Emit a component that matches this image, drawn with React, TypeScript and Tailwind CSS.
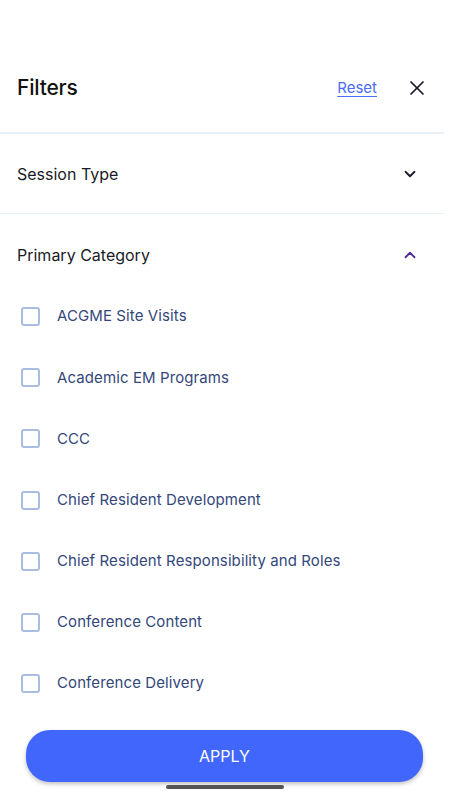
import { X, ChevronDown, ChevronUp } from 'lucide-react';

const categories = [
  'ACGME Site Visits',
  'Academic EM Programs',
  'CCC',
  'Chief Resident Development',
  'Chief Resident Responsibility and Roles',
  'Conference Content',
  'Conference Delivery',
];

export default function App() {
  return (
    <div className="relative h-[800px] w-[450px] overflow-hidden bg-white" style={{ fontFamily: 'Inter, "Noto Sans", sans-serif' }}>
      <div className="h-[64px]" />
      <div className="flex h-[48px] items-center pl-[17px] pr-[21px]">
        <h1 className="flex-1 text-[21px] font-medium tracking-[-0.2px] text-[#111]">Filters</h1>
        <button className="mr-[28px] text-[15px] text-[#4a6cf7] underline underline-offset-[3px]">Reset</button>
        <X className="h-[24px] w-[24px] text-[#1a1a2a]" strokeWidth={1.7} />
      </div>
      <div className="mt-[20px] h-[2px] w-[444px] bg-[#e8f0f8]" />

      <div className="flex h-[79px] items-center pl-[17px] pr-[31px]">
        <span className="flex-1 text-[16px] text-[#1b1b26]">Session Type</span>
        <ChevronDown className="h-[18px] w-[18px] text-[#1a1a2a]" strokeWidth={2.4} />
      </div>
      <div className="h-[1px] w-[444px] bg-[#e8f0f8]" />

      <div className="flex h-[72px] items-center pl-[17px] pr-[31px] pt-[10px]">
        <span className="flex-1 text-[16px] text-[#1b1b26]">Primary Category</span>
        <ChevronUp className="h-[18px] w-[18px] text-[#4a2a9a]" strokeWidth={2.4} />
      </div>

      <div className="flex flex-col">
        {categories.map((c) => (
          <label key={c} className="flex h-[61.2px] items-center pl-[21px]">
            <span className="h-[19px] w-[19px] shrink-0 rounded-[3px] border-2 border-[#a9bde0]" />
            <span className="ml-[17px] text-[15px] tracking-[0.1px] text-[#34477a]">{c}</span>
          </label>
        ))}
      </div>

      <div className="absolute bottom-[18px] left-[26px] right-[27px]">
        <button className="flex h-[52px] w-full items-center justify-center rounded-[24px] bg-[#4166fb] text-[16px] text-white shadow-[0_2px_4px_rgba(0,0,0,0.25)]">
          APPLY
        </button>
      </div>
      <div className="absolute bottom-[11px] left-[166px] h-[4px] w-[118px] rounded-full bg-[#555]" />
    </div>
  );
}
